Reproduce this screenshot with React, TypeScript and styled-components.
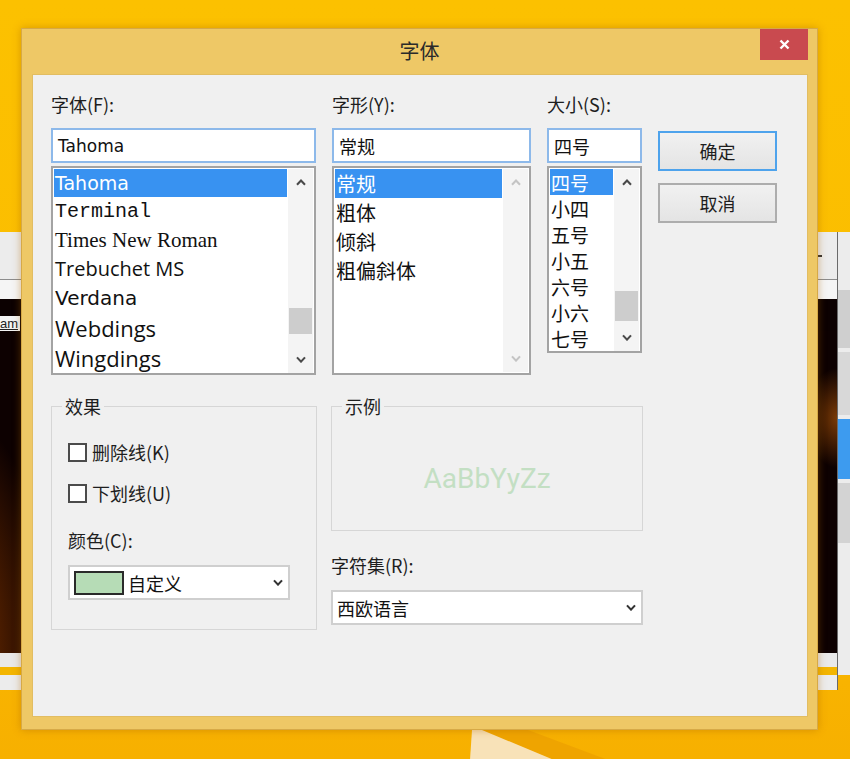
import React from "react";
import styled, { createGlobalStyle } from "styled-components";

const UI_FONT = `"Noto Sans CJK SC", "Microsoft YaHei", sans-serif`;

const GlobalStyle = createGlobalStyle`
    * { box-sizing: border-box; }
    body {
        margin: 0;
        background: #f9b800;
        font-family: ${UI_FONT};
    }
`;

interface IFontEntry {
    name: string,
    family: string,
    size: number,
    height: number
}

const fontEntries: IFontEntry[] = [
    { name: 'Tahoma', family: '"DejaVu Sans", sans-serif', size: 19, height: 28 },
    { name: 'Terminal', family: '"Liberation Mono", monospace', size: 20, height: 29 },
    { name: 'Times New Roman', family: '"Liberation Serif", serif', size: 21, height: 28 },
    { name: 'Trebuchet MS', family: '"Open Sans", sans-serif', size: 20, height: 29 },
    { name: 'Verdana', family: '"DejaVu Sans", sans-serif', size: 20, height: 30 },
    { name: 'Webdings', family: '"Open Sans", sans-serif', size: 22, height: 30 },
    { name: 'Wingdings', family: '"Open Sans", sans-serif', size: 22, height: 30 },
];

const styleEntries = ['常规', '粗体', '倾斜', '粗偏斜体'];
const sizeEntries = ['四号', '小四', '五号', '小五', '六号', '小六', '七号'];

const Chevron: React.FC<{ up?: boolean, color?: string }> = ({ up, color = '#4a4a4a' }) => (
    <svg width="10" height="7" viewBox="0 0 10 7">
        <path
            d={up ? 'M1 5.8 L5 1.6 L9 5.8' : 'M1 1.4 L5 5.6 L9 1.4'}
            fill="none"
            stroke={color}
            strokeWidth="2.1"
        />
    </svg>
);

const App: React.FC = () => {
    return (
        <>
            <GlobalStyle />
            <Desktop>
                <BackWindow>
                    <BackHeader><Dash /></BackHeader>
                    <BackStrip $h={19} $bg='#f5f5f5' />
                    <BackStrip $h={17} $bg='#0c0101' />
                    <CaptionRow><CaptionTab>am</CaptionTab></CaptionRow>
                    <BackImage />
                    <BackStrip $h={14} $bg='#e9e9e9' />
                    <BackStrip $h={8} $bg='#f3b500' />
                    <BackStrip $h={15} $bg='#ececec' />
                </BackWindow>
                <SidePanel>
                    <SideBlock $h={58} $bg='#cfcfcf' />
                    <SideBlock $h={63} $bg='#d8d8d8' />
                    <SideBlock $h={60} $bg='#3d9bef' />
                    <SideBlock $h={60} $bg='#d3d3d3' />
                </SidePanel>
                <Wedge width="160" height="30" viewBox="0 0 160 30">
                    <polygon points="22,0 70,0 150,30 96,30" fill="#efa400" />
                    <polygon points="14,0 24,0 96,30 12,30" fill="#f8e2b8" />
                </Wedge>

                <Dialog>
                    <TitleBar>
                        <Title>字体</Title>
                        <CloseButton aria-label="close">
                            <svg width="11" height="11" viewBox="0 0 11 11">
                                <path d="M1.5 1.5 L9.5 9.5 M9.5 1.5 L1.5 9.5" stroke="#fff" strokeWidth="2.4" />
                            </svg>
                        </CloseButton>
                    </TitleBar>

                    <Client>
                        <TopRow>
                            <Column>
                                <FieldLabel>字体(F):</FieldLabel>
                                <TextBox $font='"DejaVu Sans", sans-serif' $size={17}>Tahoma</TextBox>
                                <ListBox $h={209}>
                                    <Items>
                                        {fontEntries.map((f, i) => (
                                            <Item key={f.name} $selected={i === 0} $font={f.family} $size={f.size} $h={f.height}>
                                                {f.name}
                                            </Item>
                                        ))}
                                    </Items>
                                    <ScrollBar>
                                        <ArrowCell><Chevron up /></ArrowCell>
                                        <Track><Thumb $top={112} $h={26} /></Track>
                                        <ArrowCell><Chevron /></ArrowCell>
                                    </ScrollBar>
                                </ListBox>
                            </Column>

                            <Column>
                                <FieldLabel>字形(Y):</FieldLabel>
                                <TextBox>常规</TextBox>
                                <ListBox $h={209}>
                                    <Items>
                                        {styleEntries.map((s, i) => (
                                            <Item key={s} $selected={i === 0} $font={UI_FONT} $size={20} $h={29}>
                                                {s}
                                            </Item>
                                        ))}
                                    </Items>
                                    <ScrollBar>
                                        <ArrowCell><Chevron up color='#c4c4c4' /></ArrowCell>
                                        <Track />
                                        <ArrowCell><Chevron color='#c4c4c4' /></ArrowCell>
                                    </ScrollBar>
                                </ListBox>
                            </Column>

                            <Column>
                                <FieldLabel>大小(S):</FieldLabel>
                                <TextBox>四号</TextBox>
                                <ListBox $h={187}>
                                    <Items>
                                        {sizeEntries.map((s, i) => (
                                            <Item key={s} $selected={i === 0} $font={UI_FONT} $size={19} $h={26}>
                                                {s}
                                            </Item>
                                        ))}
                                    </Items>
                                    <ScrollBar>
                                        <ArrowCell><Chevron up /></ArrowCell>
                                        <Track><Thumb $top={95} $h={30} /></Track>
                                        <ArrowCell><Chevron /></ArrowCell>
                                    </ScrollBar>
                                </ListBox>
                            </Column>

                            <ButtonColumn>
                                <PushButton $default>确定</PushButton>
                                <PushButton>取消</PushButton>
                            </ButtonColumn>
                        </TopRow>

                        <BottomRow>
                            <GroupBox $h={236}>
                                <Legend>效果</Legend>
                                <CheckRow $top={19}><CheckBox />删除线(K)</CheckRow>
                                <CheckRow $top={11}><CheckBox />下划线(U)</CheckRow>
                                <PlainLabel $top={20}>颜色(C):</PlainLabel>
                                <DropDown $w={222}>
                                    <Swatch />
                                    自定义
                                    <ChevronSlot><Chevron color='#333' /></ChevronSlot>
                                </DropDown>
                            </GroupBox>

                            <Column>
                                <GroupBox $h={137}>
                                    <Legend>示例</Legend>
                                    <SampleArea>AaBbYyZz</SampleArea>
                                </GroupBox>
                                <PlainLabel $top={22}>字符集(R):</PlainLabel>
                                <DropDown $w={312}>
                                    西欧语言
                                    <ChevronSlot><Chevron color='#333' /></ChevronSlot>
                                </DropDown>
                            </Column>
                        </BottomRow>
                    </Client>
                </Dialog>
            </Desktop>
        </>
    )
}

const Desktop = styled.div`
    position: relative;
    width: 850px;
    height: 759px;
    overflow: hidden;
    background: linear-gradient(180deg, #fcc100 0%, #fbbc00 60%, #f7b000 100%);
`;

const BackWindow = styled.div`
    position: absolute;
    left: -40px;
    top: 232px;
    width: 878px;
    height: 458px;
    display: flex;
    flex-direction: column;
    background: #ececec;
    border-right: 1px solid #6a6a6a;
`;

const BackHeader = styled.div`
    height: 48px;
    flex-shrink: 0;
    border-bottom: 1px solid #8c8c8c;
    display: flex;
    align-items: center;
    justify-content: flex-end;
    padding-right: 15px;
`;

const Dash = styled.div`
    width: 4px;
    height: 2px;
    background: #333;
`;

const BackStrip = styled.div<{ $h: number, $bg: string }>`
    height: ${p => p.$h}px;
    flex-shrink: 0;
    background: ${p => p.$bg};
`;

const CaptionRow = styled.div`
    height: 15px;
    flex-shrink: 0;
    display: flex;
    background: #0c0101;
`;

const CaptionTab = styled.div`
    width: 60px;
    padding-right: 2px;
    background: #f4f4f4;
    color: #222;
    font: 13px/15px "Liberation Sans", sans-serif;
    text-align: right;
    text-decoration: underline;
    white-space: nowrap;
`;

const BackImage = styled.div`
    flex: 1;
    background:
        radial-gradient(ellipse 90px 240px at 0% 100%, #8a4606 0%, #4a1c00 45%, rgba(20, 2, 0, 0) 100%),
        radial-gradient(ellipse 30px 50px at 100% 27%, #7a3a05 0%, rgba(20, 2, 0, 0) 100%),
        #0d0101;
`;

const SidePanel = styled.div`
    position: absolute;
    left: 838px;
    top: 232px;
    width: 12px;
    height: 443px;
    padding-top: 58px;
    display: flex;
    flex-direction: column;
    gap: 4px;
    background: #ececec;
`;

const SideBlock = styled.div<{ $h: number, $bg: string }>`
    height: ${p => p.$h}px;
    background: ${p => p.$bg};
`;

const Wedge = styled.svg`
    position: absolute;
    left: 458px;
    top: 730px;
`;

const Dialog = styled.div`
    position: absolute;
    left: 21px;
    top: 28px;
    width: 797px;
    height: 702px;
    display: flex;
    flex-direction: column;
    background: #eec866;
    border: 1px solid #d6a947;
    box-shadow: 0 0 8px rgba(170, 100, 0, 0.45);
`;

const TitleBar = styled.div`
    height: 45px;
    flex-shrink: 0;
    display: grid;
    grid-template-columns: 48px 1fr 48px;
    padding: 0 9px;
    align-items: start;
`;

const Title = styled.div`
    grid-column: 2;
    text-align: center;
    font-size: 20px;
    line-height: 44px;
    color: #2a2a2a;
`;

const CloseButton = styled.button`
    grid-column: 3;
    width: 48px;
    height: 31px;
    padding: 0;
    border: none;
    background: #c94a4f;
    display: flex;
    align-items: center;
    justify-content: center;
`;

const Client = styled.div`
    flex: 1;
    margin: 0 9px 12px 10px;
    padding: 17px 0 0 18px;
    background: #f0f0f0;
    border: 1px solid #e2bd62;
`;

const TopRow = styled.div`
    display: grid;
    grid-template-columns: 265px 199px 95px 119px;
    column-gap: 16px;
    align-items: start;
`;

const Column = styled.div`
    display: flex;
    flex-direction: column;
`;

const FieldLabel = styled.div`
    height: 36px;
    font-size: 18px;
    line-height: 24px;
    color: #1e1e1e;
    white-space: nowrap;
`;

const TextBox = styled.div<{ $font?: string, $size?: number }>`
    height: 35px;
    padding-left: 5px;
    display: flex;
    align-items: center;
    background: #fff;
    border: 2px solid #8db9ea;
    font-family: ${p => p.$font || UI_FONT};
    font-size: ${p => p.$size || 18}px;
    color: #111;
`;

const ListBox = styled.div<{ $h: number }>`
    margin-top: 3px;
    height: ${p => p.$h}px;
    padding: 1px;
    display: grid;
    grid-template-columns: 1fr 25px;
    column-gap: 1px;
    background: #fff;
    border: 2px solid #a3a3a3;
`;

const Items = styled.div`
    display: flex;
    flex-direction: column;
`;

const Item = styled.div<{ $selected?: boolean, $font: string, $size: number, $h: number }>`
    height: ${p => p.$h}px;
    flex-shrink: 0;
    padding-left: 1px;
    display: flex;
    align-items: center;
    white-space: nowrap;
    font-family: ${p => p.$font};
    font-size: ${p => p.$size}px;
    background: ${p => p.$selected ? '#3892f1' : 'transparent'};
    color: ${p => p.$selected ? '#fff' : '#111'};
`;

const ScrollBar = styled.div`
    display: flex;
    flex-direction: column;
    background: #f4f4f4;
`;

const ArrowCell = styled.div`
    height: 27px;
    flex-shrink: 0;
    display: flex;
    align-items: center;
    justify-content: center;
`;

const Track = styled.div`
    flex: 1;
    padding: 0 1px;
`;

const Thumb = styled.div<{ $top: number, $h: number }>`
    margin-top: ${p => p.$top}px;
    height: ${p => p.$h}px;
    background: #cdcdcd;
`;

const ButtonColumn = styled.div`
    padding-top: 39px;
    display: flex;
    flex-direction: column;
    gap: 12px;
`;

const PushButton = styled.button<{ $default?: boolean }>`
    height: 40px;
    width: 100%;
    padding: 0;
    border: 2px solid ${p => p.$default ? '#4ea3ec' : '#adadad'};
    background: linear-gradient(180deg, #f1f1f1 0%, #e4e4e4 100%);
    font-family: ${UI_FONT};
    font-size: 18px;
    color: #1e1e1e;
`;

const BottomRow = styled.div`
    margin-top: 19px;
    display: grid;
    grid-template-columns: 266px 312px;
    column-gap: 14px;
    align-items: start;
`;

const GroupBox = styled.fieldset<{ $h: number }>`
    margin: 0;
    min-width: 0;
    height: ${p => p.$h}px;
    padding: 0 16px;
    border: 1px solid #d6d6d6;
    display: flex;
    flex-direction: column;
    align-items: flex-start;
`;

const Legend = styled.legend`
    margin-left: -6px;
    padding: 0 3px;
    font-size: 18px;
    line-height: 24px;
    color: #1e1e1e;
`;

const CheckRow = styled.label<{ $top: number }>`
    margin-top: ${p => p.$top}px;
    height: 30px;
    display: flex;
    align-items: center;
    gap: 5px;
    font-size: 18px;
    color: #1e1e1e;
`;

const CheckBox = styled.span`
    width: 19px;
    height: 19px;
    background: #fff;
    border: 2px solid #4b4b4b;
`;

const PlainLabel = styled.div<{ $top: number }>`
    margin-top: ${p => p.$top}px;
    font-size: 18px;
    line-height: 24px;
    color: #1e1e1e;
`;

const DropDown = styled.div<{ $w: number }>`
    margin-top: 13px;
    width: ${p => p.$w}px;
    height: 35px;
    padding: 0 5px 0 4px;
    display: flex;
    align-items: center;
    gap: 4px;
    background: #fff;
    border: 2px solid #cfcfcf;
    font-size: 18px;
    color: #111;
`;

const Swatch = styled.span`
    width: 50px;
    height: 24px;
    background: #b6dcb6;
    border: 2px solid #2a2a2a;
`;

const ChevronSlot = styled.span`
    margin-left: auto;
    display: flex;
`;

const SampleArea = styled.div`
    height: 112px;
    align-self: stretch;
    padding-top: 8px;
    display: flex;
    align-items: center;
    justify-content: center;
    font-family: Roboto, "Liberation Sans", sans-serif;
    font-size: 28px;
    color: #c3dfc3;
`;

export default App
